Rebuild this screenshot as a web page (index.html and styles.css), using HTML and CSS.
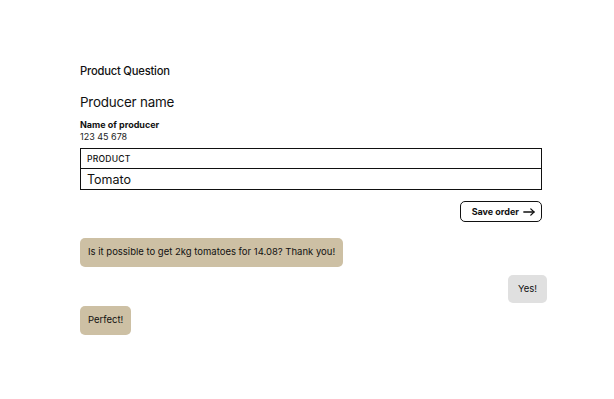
FILE: index.html
```html
<!DOCTYPE html>
<html lang="en">
<head>
    <meta charset="UTF-8">
    <meta name="viewport" content="width=device-width, initial-scale=1.0">
    <title>Product Question</title>
    <link rel="stylesheet" href="styles.css">
</head>
<body>
    <div class="card">
        <h4 class="title">Product Question</h4>
        <h2 class="producer">Producer name</h2>
        <div class="label">Name of producer</div>
        <div class="phone">123 45 678</div>

        <table class="product-table">
            <thead>
                <tr><th>PRODUCT</th></tr>
            </thead>
            <tbody>
                <tr><td>Tomato</td></tr>
            </tbody>
        </table>

        <div class="actions">
            <button class="btn">Save order
                <svg width="12" height="8" viewBox="0 0 12 8" fill="none" stroke="#111" stroke-width="1.3" stroke-linecap="round" stroke-linejoin="round">
                    <path d="M0.8 4H11"/>
                    <path d="M7.8 0.9L11 4L7.8 7.1"/>
                </svg>
            </button>
        </div>

        <div class="chat">
            <div class="msg msg-in">Is it possible to get 2kg tomatoes for 14.08? Thank you!</div>
            <div class="msg msg-out">Yes!</div>
            <div class="msg msg-in">Perfect!</div>
        </div>
    </div>
</body>
</html>
```

FILE: styles.css
```css
* {
    margin: 0;
    padding: 0;
    box-sizing: border-box;
}

body {
    font-family: 'Inter', 'Roboto', sans-serif;
    background: #fff;
    color: #111;
}

.card {
    margin: 44px 0 0 56px;
    width: 506px;
    height: 308px;
    padding: 19px 20px 0 24px;
}

.title {
    font-size: 11.2px;
    line-height: 16px;
    font-weight: 500;
    letter-spacing: -0.2px;
}

.producer {
    margin-top: 13px;
    font-size: 13.4px;
    line-height: 20px;
    font-weight: 400;
    letter-spacing: -0.2px;
}

.label {
    margin-top: 7px;
    font-size: 9px;
    line-height: 12px;
    font-weight: 700;
}

.phone {
    font-size: 9px;
    line-height: 12px;
    color: #222;
}

.product-table {
    margin-top: 5px;
    width: 100%;
    border-collapse: collapse;
}

.product-table th,
.product-table td {
    border: 1px solid #111;
    text-align: left;
    padding: 0 6px;
}

.product-table th {
    height: 20px;
    font-size: 8.6px;
    font-weight: 500;
    letter-spacing: 0.2px;
}

.product-table td {
    height: 21px;
    font-size: 12.5px;
}

.actions {
    display: flex;
    justify-content: flex-end;
    margin-top: 11px;
}

.btn {
    display: flex;
    align-items: center;
    gap: 4px;
    height: 21px;
    padding: 0 6px 0 11px;
    border: 1px solid #111;
    border-radius: 5px;
    background: #fff;
    font-family: inherit;
    font-size: 9px;
    font-weight: 700;
    color: #111;
    cursor: pointer;
}

.chat {
    display: flex;
    flex-direction: column;
    align-items: flex-start;
    margin-top: 16px;
}

.msg {
    font-size: 9.5px;
    line-height: 12px;
    padding: 8px 8px 9px;
    border-radius: 5px;
}

.msg-in {
    background: #cdc0a4;
}

.msg-out {
    align-self: flex-end;
    margin: 8px -5px 3px 0;
    padding: 8px 10px;
    background: #e0e0e0;
}
```
